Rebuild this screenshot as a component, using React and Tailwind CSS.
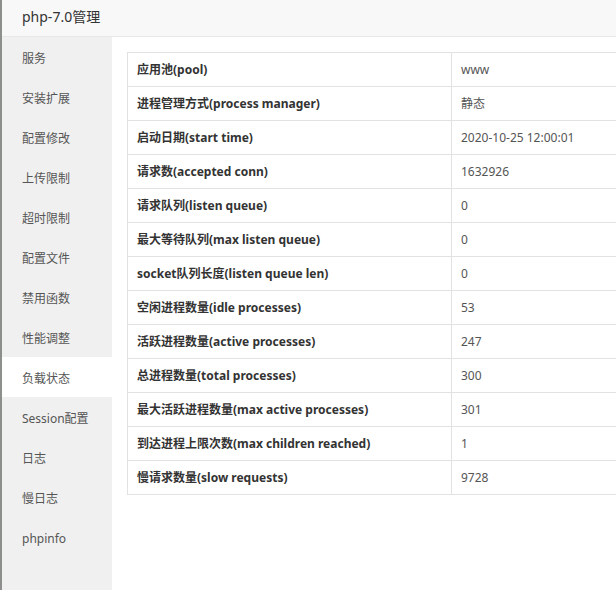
const menu = [
  "服务",
  "安装扩展",
  "配置修改",
  "上传限制",
  "超时限制",
  "配置文件",
  "禁用函数",
  "性能调整",
  "负载状态",
  "Session配置",
  "日志",
  "慢日志",
  "phpinfo",
];

const rows = [
  ["应用池(pool)", "www"],
  ["进程管理方式(process manager)", "静态"],
  ["启动日期(start time)", "2020-10-25 12:00:01"],
  ["请求数(accepted conn)", "1632926"],
  ["请求队列(listen queue)", "0"],
  ["最大等待队列(max listen queue)", "0"],
  ["socket队列长度(listen queue len)", "0"],
  ["空闲进程数量(idle processes)", "53"],
  ["活跃进程数量(active processes)", "247"],
  ["总进程数量(total processes)", "300"],
  ["最大活跃进程数量(max active processes)", "301"],
  ["到达进程上限次数(max children reached)", "1"],
  ["慢请求数量(slow requests)", "9728"],
];

export default function App() {
  return (
    <div
      className="flex h-[590px] w-[616px] overflow-hidden bg-white"
      style={{ fontFamily: '"Noto Sans", "Noto Sans CJK SC", sans-serif' }}
    >
      <div className="w-[2px] shrink-0 bg-[#8c8f8c]"></div>
      <div className="flex min-w-0 flex-1 flex-col">
        <div className="flex h-[37px] shrink-0 items-center border-b border-[#e8e8e8] bg-[#f8f8f8] pb-[4px] pl-[20px] text-[14px] text-[#333]">
          php-7.0管理
        </div>
        <div className="flex min-h-0 flex-1">
          <div className="w-[110px] shrink-0 bg-[#f0f0f0]">
            {menu.map((m) => (
              <div
                key={m}
                className={`flex h-[40px] items-center pl-[20px] pt-[3px] text-[12px] text-[#555] ${
                  m === "负载状态" ? "bg-white" : ""
                }`}
              >
                {m}
              </div>
            ))}
          </div>
          <div className="min-w-0 flex-1 overflow-hidden pl-[15px] pt-[15px]">
            <table className="w-[600px] border-collapse text-[12px]">
              <tbody>
                {rows.map(([k, v]) => (
                  <tr key={k} className="h-[34px]">
                    <td className="w-[324px] border border-[#e2e2e2] pl-[9px] font-bold text-[#333]">
                      {k}
                    </td>
                    <td className="border border-[#e2e2e2] pl-[9px] text-[#555]">
                      {v}
                    </td>
                  </tr>
                ))}
              </tbody>
            </table>
          </div>
        </div>
      </div>
    </div>
  );
}
